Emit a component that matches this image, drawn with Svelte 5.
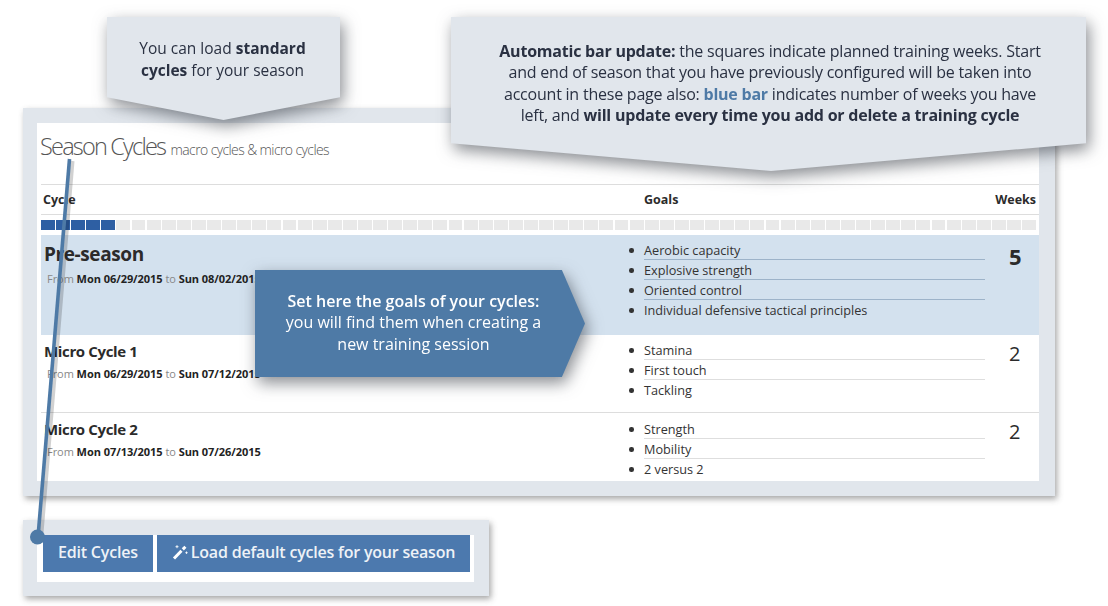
<script>
	const weeks = 66;
	const done = 5;
	const cycles = [
		{ name: 'Pre-season', from: 'Mon 06/29/2015', to: 'Sun 08/02/2015', goals: ['Aerobic capacity', 'Explosive strength', 'Oriented control', 'Individual defensive tactical principles'], weeks: 5, macro: true },
		{ name: 'Micro Cycle 1', from: 'Mon 06/29/2015', to: 'Sun 07/12/2015', goals: ['Stamina', 'First touch', 'Tackling'], weeks: 2 },
		{ name: 'Micro Cycle 2', from: 'Mon 07/13/2015', to: 'Sun 07/26/2015', goals: ['Strength', 'Mobility', '2 versus 2'], weeks: 2 }
	];
</script>

<main class="page">
	<section class="panel">
		<div class="sheet">
			<h1>Season Cycles <small>macro cycles &amp; micro cycles</small></h1>
			<div class="head">
				<span>Cycle</span>
				<span>Goals</span>
				<span>Weeks</span>
			</div>
			<div class="bar">
				{#each Array(weeks) as _, i}
					<i class:on={i < done}></i>
				{/each}
			</div>
			{#each cycles as c}
				<div class="row" class:macro={c.macro}>
					<div class="info">
						<h2>{c.name}</h2>
						<p>From <b>{c.from}</b> to <b>{c.to}</b></p>
					</div>
					<ul>
						{#each c.goals as g}
							<li>{g}</li>
						{/each}
					</ul>
					<div class="count">{c.weeks}</div>
				</div>
			{/each}
		</div>
	</section>

	<section class="panel actions">
		<div class="buttons">
			<button>Edit Cycles</button>
			<button>
				<svg viewBox="0 0 16 16" width="16" height="16" aria-hidden="true">
					<path d="M2 14.5 L9.5 6.8" stroke="#fff" stroke-width="3" fill="none" />
					<path d="M10.8 5.4 L13.4 2.8" stroke="#fff" stroke-width="3" fill="none" />
					<path d="M5 1.2v3M3.5 2.7h3M14.5 7.5v2.4M13.3 8.7h2.4" stroke="#fff" stroke-width=".9" fill="none" />
				</svg>
				Load default cycles for your season
			</button>
		</div>
	</section>

	<svg class="leader" width="1108" height="606" aria-hidden="true">
		<line x1="69.5" y1="159" x2="38" y2="537" stroke="#000" stroke-opacity=".18" stroke-width="4" transform="translate(3 2)" />
		<line x1="69.5" y1="159" x2="38" y2="537" stroke="#4e7aa6" stroke-width="3.6" />
		<circle cx="37.5" cy="537" r="7.5" fill="#4e7aa6" />
	</svg>

	<div class="callout load">
		<div class="shape">You can load <b>standard<br />cycles</b> for your season</div>
	</div>
	<div class="callout auto">
		<div class="shape">
			<b>Automatic bar update:</b> the squares indicate planned training weeks. Start<br />
			and end of season that you have previously configured will be taken into<br />
			account in these page also: <b class="blue">blue bar</b> indicates number of weeks you have<br />
			left, and <b>will update every time you add or delete a training cycle</b>
		</div>
	</div>
	<div class="callout goals">
		<div class="shape">
			<b>Set here the goals of your cycles:</b><br />
			you will find them when creating a<br />
			new training session
		</div>
	</div>
</main>

<style>
	:global(body) {
		margin: 0;
		background: #fff;
	}

	.page {
		position: relative;
		width: 1108px;
		height: 606px;
		overflow: hidden;
		box-sizing: border-box;
		padding: 108px 0 0 23px;
		font-family: 'Open Sans', 'Noto Sans', sans-serif;
		color: #2b2b2b;
	}

	.panel {
		width: 1032px;
		box-sizing: border-box;
		padding: 15px 16px 15px 14px;
		background: #e1e6ec;
		box-shadow: 2px 3px 6px rgba(60, 60, 60, 0.45);
	}

	.sheet {
		height: 358px;
		padding-left: 4px;
		background: #fff;
		overflow: hidden;
	}

	h1 {
		height: 61px;
		margin: 0;
		box-sizing: border-box;
		padding: 7px 0 0;
		margin-left: -1px;
		font-size: 23.5px;
		line-height: 32px;
		font-weight: 300;
		letter-spacing: -1.8px;
		color: #555;
	}

	h1 small {
		margin-left: 1px;
		font-size: 14px;
		letter-spacing: -0.6px;
		color: #555;
	}

	.head {
		display: grid;
		grid-template-columns: 601px 1fr auto;
		height: 29px;
		border-top: 1px solid #ddd;
		border-bottom: 1px solid #ddd;
		font-size: 12.5px;
		font-weight: 700;
		line-height: 29px;
		padding: 0 3px 0 2px;
	}

	.bar {
		display: flex;
		gap: 1.2px;
		height: 10px;
		margin: 5px 3px 5px 0;
	}

	.bar i {
		flex: 1;
		background: #e9e9e9;
	}

	.bar i.on {
		background: #2e5fa3;
	}

	.row {
		display: grid;
		grid-template-columns: 603px 341px 1fr;
		height: 78px;
		box-sizing: border-box;
		border-bottom: 1px solid #ddd;
	}

	.row:last-child {
		border-bottom: 0;
	}

	.row:last-child ul {
		padding-top: 6px;
	}

	.row.macro {
		height: 100px;
		background: #d3e1ee;
		border-bottom: 0;
	}

	.info {
		padding: 6px 0 0 3px;
	}

	h2 {
		margin: 0;
		font-size: 15px;
		line-height: 20px;
		font-weight: 700;
		letter-spacing: -0.35px;
	}

	.macro h2 {
		padding-top: 2px;
		font-size: 19px;
		line-height: 22px;
		font-weight: 700;
		letter-spacing: -0.4px;
	}

	p {
		margin: 5px 0 0 3px;
		font-size: 11px;
		line-height: 16px;
		letter-spacing: -0.05px;
		color: #888;
	}

	.macro p {
		margin-top: 6px;
	}

	p b {
		color: #222;
	}

	ul {
		margin: 0;
		padding: 5px 0 0;
		list-style: none;
	}

	li {
		position: relative;
		height: 20px;
		box-sizing: border-box;
		font-size: 12.7px;
		line-height: 20px;
		color: #333;
		border-bottom: 1px solid #dedede;
	}

	li::before {
		content: '';
		position: absolute;
		left: -15px;
		top: 8px;
		width: 4.5px;
		height: 4.5px;
		border-radius: 50%;
		background: #333;
	}

	li:last-child {
		border-bottom: 0;
	}

	.macro li {
		border-bottom-color: #9db3c9;
	}

	.count {
		padding: 5px 0 0 24px;
		font-size: 20px;
		line-height: 28px;
	}

	.macro .count {
		padding-top: 7px;
		font-size: 22px;
		font-weight: 700;
	}

	.actions {
		width: 466px;
		margin-top: 24px;
		padding: 15px 15px 14px 14px;
	}

	.buttons {
		display: flex;
		gap: 4px;
		height: 47px;
		box-sizing: border-box;
		padding-left: 6px;
		background: #fff;
	}

	button {
		display: flex;
		align-items: center;
		gap: 3px;
		height: 37px;
		padding: 0 15px 3px;
		border: 0;
		background: #4c79ae;
		color: #eef2f7;
		font: 600 16px 'Open Sans', 'Noto Sans', sans-serif;
		letter-spacing: -0.2px;
	}

	.leader {
		position: absolute;
		left: 0;
		top: 0;
		pointer-events: none;
	}

	.callout {
		position: absolute;
		filter: drop-shadow(3px 6px 8px rgba(40, 45, 55, 0.55));
		text-align: center;
	}

	.shape {
		box-sizing: border-box;
		height: 100%;
		background: #e1e6ec;
		color: #2a3142;
		font-size: 15.5px;
	}

	.load {
		left: 107px;
		top: 17px;
		width: 233px;
		height: 103px;
	}

	.load .shape {
		padding: 20px 2px 0 0;
		line-height: 22px;
		clip-path: polygon(0 0, 100% 0, 100% 78%, 50% 100%, 0 78%);
	}

	.auto {
		left: 451px;
		top: 17px;
		width: 635px;
		height: 154px;
	}

	.auto .shape {
		padding: 24px 0 0 3px;
		line-height: 21.3px;
		font-size: 16px;
		letter-spacing: -0.22px;
		clip-path: polygon(0 0, 100% 0, 100% 82%, 50.4% 100%, 0 82%);
	}

	.blue {
		color: #4e7aa6;
	}

	.goals {
		left: 255px;
		top: 270px;
		width: 330px;
		height: 107px;
	}

	.goals .shape {
		padding: 21px 13px 0 0;
		background: #4e7aa6;
		color: #fff;
		line-height: 21.3px;
		font-size: 16px;
		clip-path: polygon(0 0, 93% 0, 100% 50%, 93% 100%, 0 100%);
	}

	.goals .shape b {
		font-weight: 600;
	}
</style>
